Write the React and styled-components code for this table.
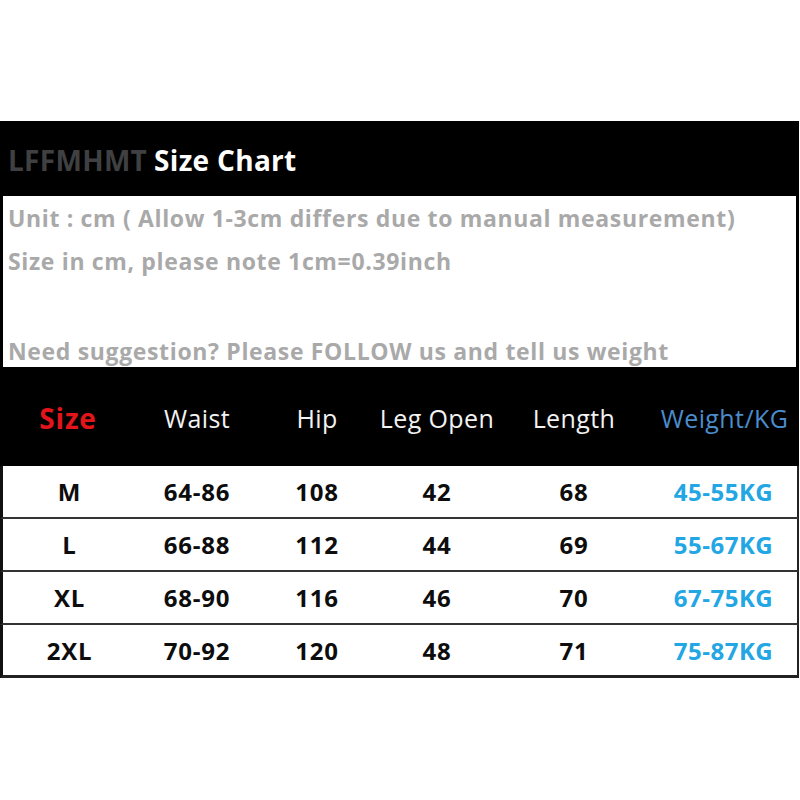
import React from "react";
import styled, { createGlobalStyle } from "styled-components";

const rows = [
  { size: "M", waist: "64-86", hip: "108", leg: "42", length: "68", weight: "45-55KG" },
  { size: "L", waist: "66-88", hip: "112", leg: "44", length: "69", weight: "55-67KG" },
  { size: "XL", waist: "68-90", hip: "116", leg: "46", length: "70", weight: "67-75KG" },
  { size: "2XL", waist: "70-92", hip: "120", leg: "48", length: "71", weight: "75-87KG" },
];

const App = () => {
  return (
    <>
      <GlobalStyle />
      <Page>
        <Chart>
          <TitleBar>
            <Brand>LFFMHMT</Brand> Size Chart
          </TitleBar>

          <InfoBox>
            <InfoLine top={6}>Unit : cm ( Allow 1-3cm differs due to manual measurement)</InfoLine>
            <InfoLine top={11}>Size in cm, please note 1cm=0.39inch</InfoLine>
            <InfoLine top={58}>Need suggestion? Please FOLLOW us and tell us weight</InfoLine>
          </InfoBox>

          <HeadRow>
            <HeadCell variant="size">Size</HeadCell>
            <HeadCell>Waist</HeadCell>
            <HeadCell>Hip</HeadCell>
            <HeadCell>Leg Open</HeadCell>
            <HeadCell>Length</HeadCell>
            <HeadCell variant="weight">Weight/KG</HeadCell>
          </HeadRow>

          {rows.map((r) => (
            <DataRow key={r.size}>
              <Cell>{r.size}</Cell>
              <Cell>{r.waist}</Cell>
              <Cell>{r.hip}</Cell>
              <Cell>{r.leg}</Cell>
              <Cell>{r.length}</Cell>
              <Cell blue>{r.weight}</Cell>
            </DataRow>
          ))}
        </Chart>
      </Page>
    </>
  );
};

export default App;

const GlobalStyle = createGlobalStyle`
  body {
    margin: 0;
    background: #ffffff;
    font-family: "Open Sans", "DejaVu Sans", sans-serif;
  }
`;

const Page = styled.div`
  width: 800px;
  height: 800px;
  padding-top: 121px;
  box-sizing: border-box;
  background: #ffffff;
`;

const Chart = styled.div`
  width: 799px;
  display: flex;
  flex-direction: column;
`;

const TitleBar = styled.div`
  height: 75px;
  background: #000000;
  color: #ffffff;
  font-weight: 700;
  font-size: 28px;
  letter-spacing: 0.3px;
  display: flex;
  align-items: center;
  gap: 7px;
  padding-left: 8px;
  padding-top: 2px;
  box-sizing: border-box;
`;

const Brand = styled.span`
  color: #3f4042;
`;

const InfoBox = styled.div`
  height: 171px;
  background: #ffffff;
  border-left: 3px solid #000;
  border-right: 3px solid #000;
  box-sizing: border-box;
  padding-left: 5px;
  display: flex;
  flex-direction: column;
`;

const InfoLine = styled.div`
  margin-top: ${(p) => p.top}px;
  font-size: 23px;
  line-height: 32px;
  font-weight: 700;
  color: #a9a9a9;
  letter-spacing: 0.65px;
  white-space: nowrap;
`;

const HeadRow = styled.div`
  height: 99px;
  background: #000000;
  display: grid;
  grid-template-columns: 136px 122px 118px 122px 152px 149px;
  align-items: center;
`;

const HeadCell = styled.div`
  text-align: center;
  font-size: ${(p) => (p.variant === "size" ? "28px" : "25px")};
  font-weight: ${(p) => (p.variant === "size" ? 700 : 400)};
  color: ${(p) =>
    p.variant === "size" ? "#e3151b" : p.variant === "weight" ? "#4b8ccc" : "#f2f2f2"};
  letter-spacing: ${(p) => (p.variant === "size" ? "0.8px" : "0.4px")};
  padding-top: 2px;
`;

const DataRow = styled.div`
  height: 53px;
  background: #ffffff;
  display: grid;
  grid-template-columns: 133px 122px 118px 122px 152px 147px;
  align-items: center;
  border-left: 3px solid #111;
  border-right: 2px solid #222;
  border-bottom: 2px solid #333;
  box-sizing: border-box;

  &:last-child {
    border-bottom: 3px solid #222;
  }
`;

const Cell = styled.div`
  text-align: center;
  font-size: 24px;
  font-weight: 700;
  color: ${(p) => (p.blue ? "#22a6e4" : "#0d0d0d")};
  letter-spacing: ${(p) => (p.blue ? "0.5px" : "0.8px")};
`;
